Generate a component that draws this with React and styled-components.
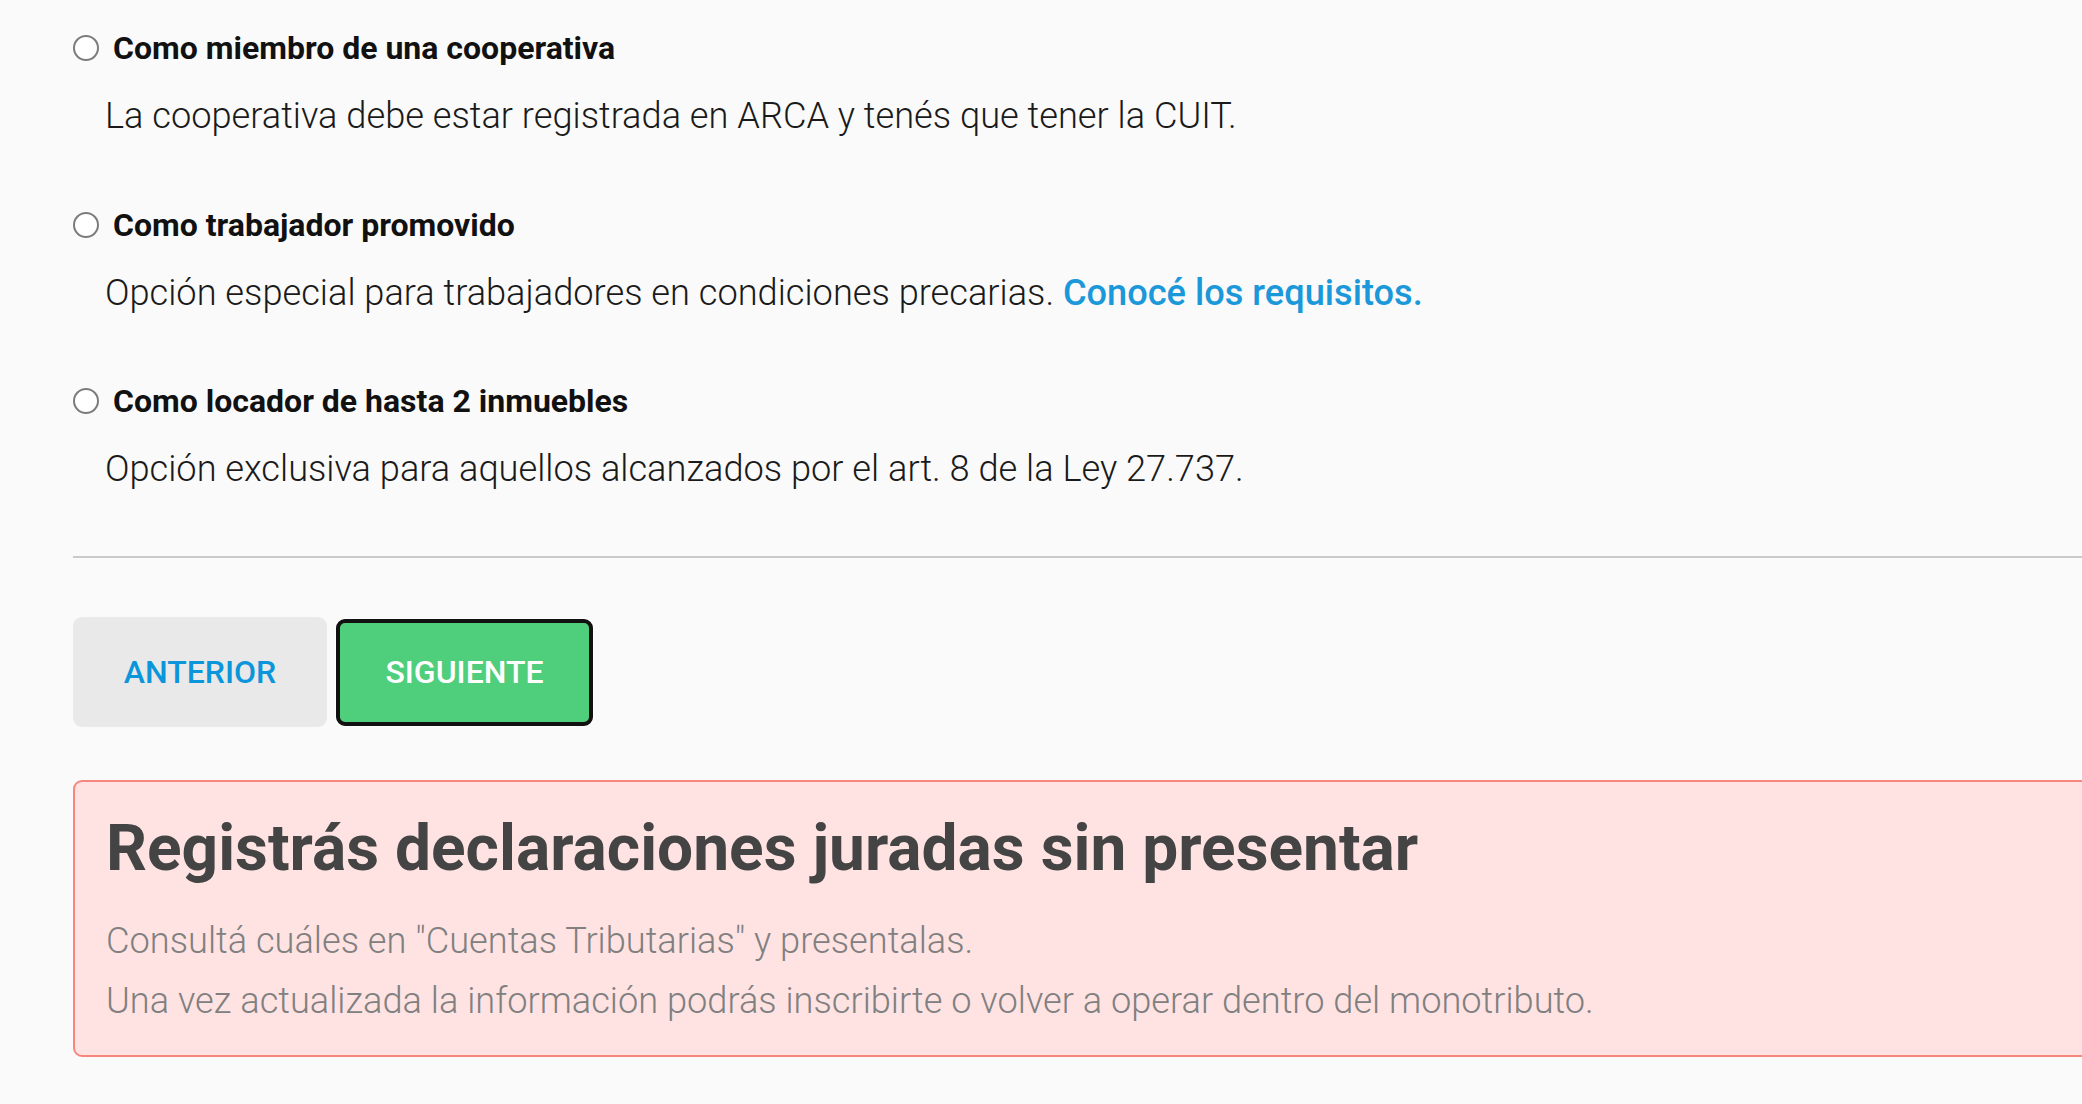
import React from "react";
import styled, { createGlobalStyle } from "styled-components";

const GlobalStyle = createGlobalStyle`
  html, body {
    margin: 0;
    padding: 0;
    background: #fafafa;
    overflow: hidden;
  }
  body {
    font-family: Roboto, "Liberation Sans", Arial, sans-serif;
    color: #111;
  }
`;

const Page = styled.main`
  min-height: 100vh;
  padding: 30px 0 0 73px;
  box-sizing: border-box;
`;

const Column = styled.div`
  width: 2140px;
  display: flex;
  flex-direction: column;
`;

const OptionList = styled.div`
  display: flex;
  flex-direction: column;
  gap: 66.6px;
  margin-bottom: 63px;
`;

const Option = styled.div`
  display: flex;
  flex-direction: column;
`;

const LabelRow = styled.label`
  display: flex;
  align-items: center;
  gap: 14px;
  height: 36px;
  font-size: 32px;
  line-height: 36px;
  font-weight: 700;
  color: #111;
  cursor: pointer;
`;

const Radio = styled.span`
  width: 26px;
  height: 26px;
  box-sizing: border-box;
  border-radius: 50%;
  border: 2px solid #7c7c7c;
  background: #fff;
  flex: none;
`;

const Description = styled.p`
  margin: 26px 0 0 32px;
  font-size: 36.2px;
  line-height: 48px;
  font-weight: 300;
  color: #1a1a1a;
`;

const Link = styled.a`
  color: #1a98d9;
  font-weight: 500;
  text-decoration: none;
`;

const Divider = styled.hr`
  margin: 0;
  border: none;
  height: 2px;
  background: #cacaca;
`;

const Actions = styled.div`
  display: flex;
  align-items: center;
  gap: 9px;
  margin-top: 59px;
`;

const Button = styled.button`
  box-sizing: border-box;
  height: ${(p) => (p.$primary ? "107px" : "110px")};
  width: ${(p) => (p.$primary ? "257px" : "254px")};
  border-radius: 9px;
  font-family: Roboto, "Liberation Sans", Arial, sans-serif;
  font-size: 32px;
  font-weight: 500;
  letter-spacing: 0;
  text-transform: uppercase;
  cursor: pointer;
  background: ${(p) => (p.$primary ? "#4fce7b" : "#e9e9e9")};
  color: ${(p) => (p.$primary ? "#ffffff" : "#0b96dc")};
  border: ${(p) => (p.$primary ? "4px solid #111" : "none")};
  box-shadow: ${(p) => (p.$primary ? "0 0 0 1px #ffffff" : "none")};
`;

const Alert = styled.section`
  margin-top: 53px;
  box-sizing: border-box;
  height: 277px;
  border: 2px solid #f5877f;
  border-radius: 9px;
  background: #ffe3e3;
  padding: 28px 30px 0 31px;
`;

const AlertTitle = styled.h2`
  margin: 0;
  font-size: 64px;
  line-height: 77px;
  font-weight: 700;
  color: #444444;
`;

const AlertText = styled.p`
  margin: 0;
  font-size: 36.2px;
  line-height: 60px;
  font-weight: 300;
  color: #808080;
  &:first-of-type {
    margin-top: 24px;
  }
`;

const options = [
  {
    title: "Como miembro de una cooperativa",
    text: "La cooperativa debe estar registrada en ARCA y tenés que tener la CUIT.",
  },
  {
    title: "Como trabajador promovido",
    text: "Opción especial para trabajadores en condiciones precarias. ",
    link: "Conocé los requisitos.",
  },
  {
    title: "Como locador de hasta 2 inmuebles",
    text: "Opción exclusiva para aquellos alcanzados por el art. 8 de la Ley 27.737.",
  },
];

export default function App() {
  return (
    <>
      <GlobalStyle />
      <Page>
        <Column>
          <OptionList>
            {options.map((o) => (
              <Option key={o.title}>
                <LabelRow>
                  <Radio />
                  {o.title}
                </LabelRow>
                <Description>
                  {o.text}
                  {o.link && <Link href="#">{o.link}</Link>}
                </Description>
              </Option>
            ))}
          </OptionList>
          <Divider />
          <Actions>
            <Button>Anterior</Button>
            <Button $primary>Siguiente</Button>
          </Actions>
          <Alert>
            <AlertTitle>Registrás declaraciones juradas sin presentar</AlertTitle>
            <AlertText>Consultá cuáles en "Cuentas Tributarias" y presentalas.</AlertText>
            <AlertText>
              Una vez actualizada la información podrás inscribirte o volver a operar dentro del monotributo.
            </AlertText>
          </Alert>
        </Column>
      </Page>
    </>
  );
}
